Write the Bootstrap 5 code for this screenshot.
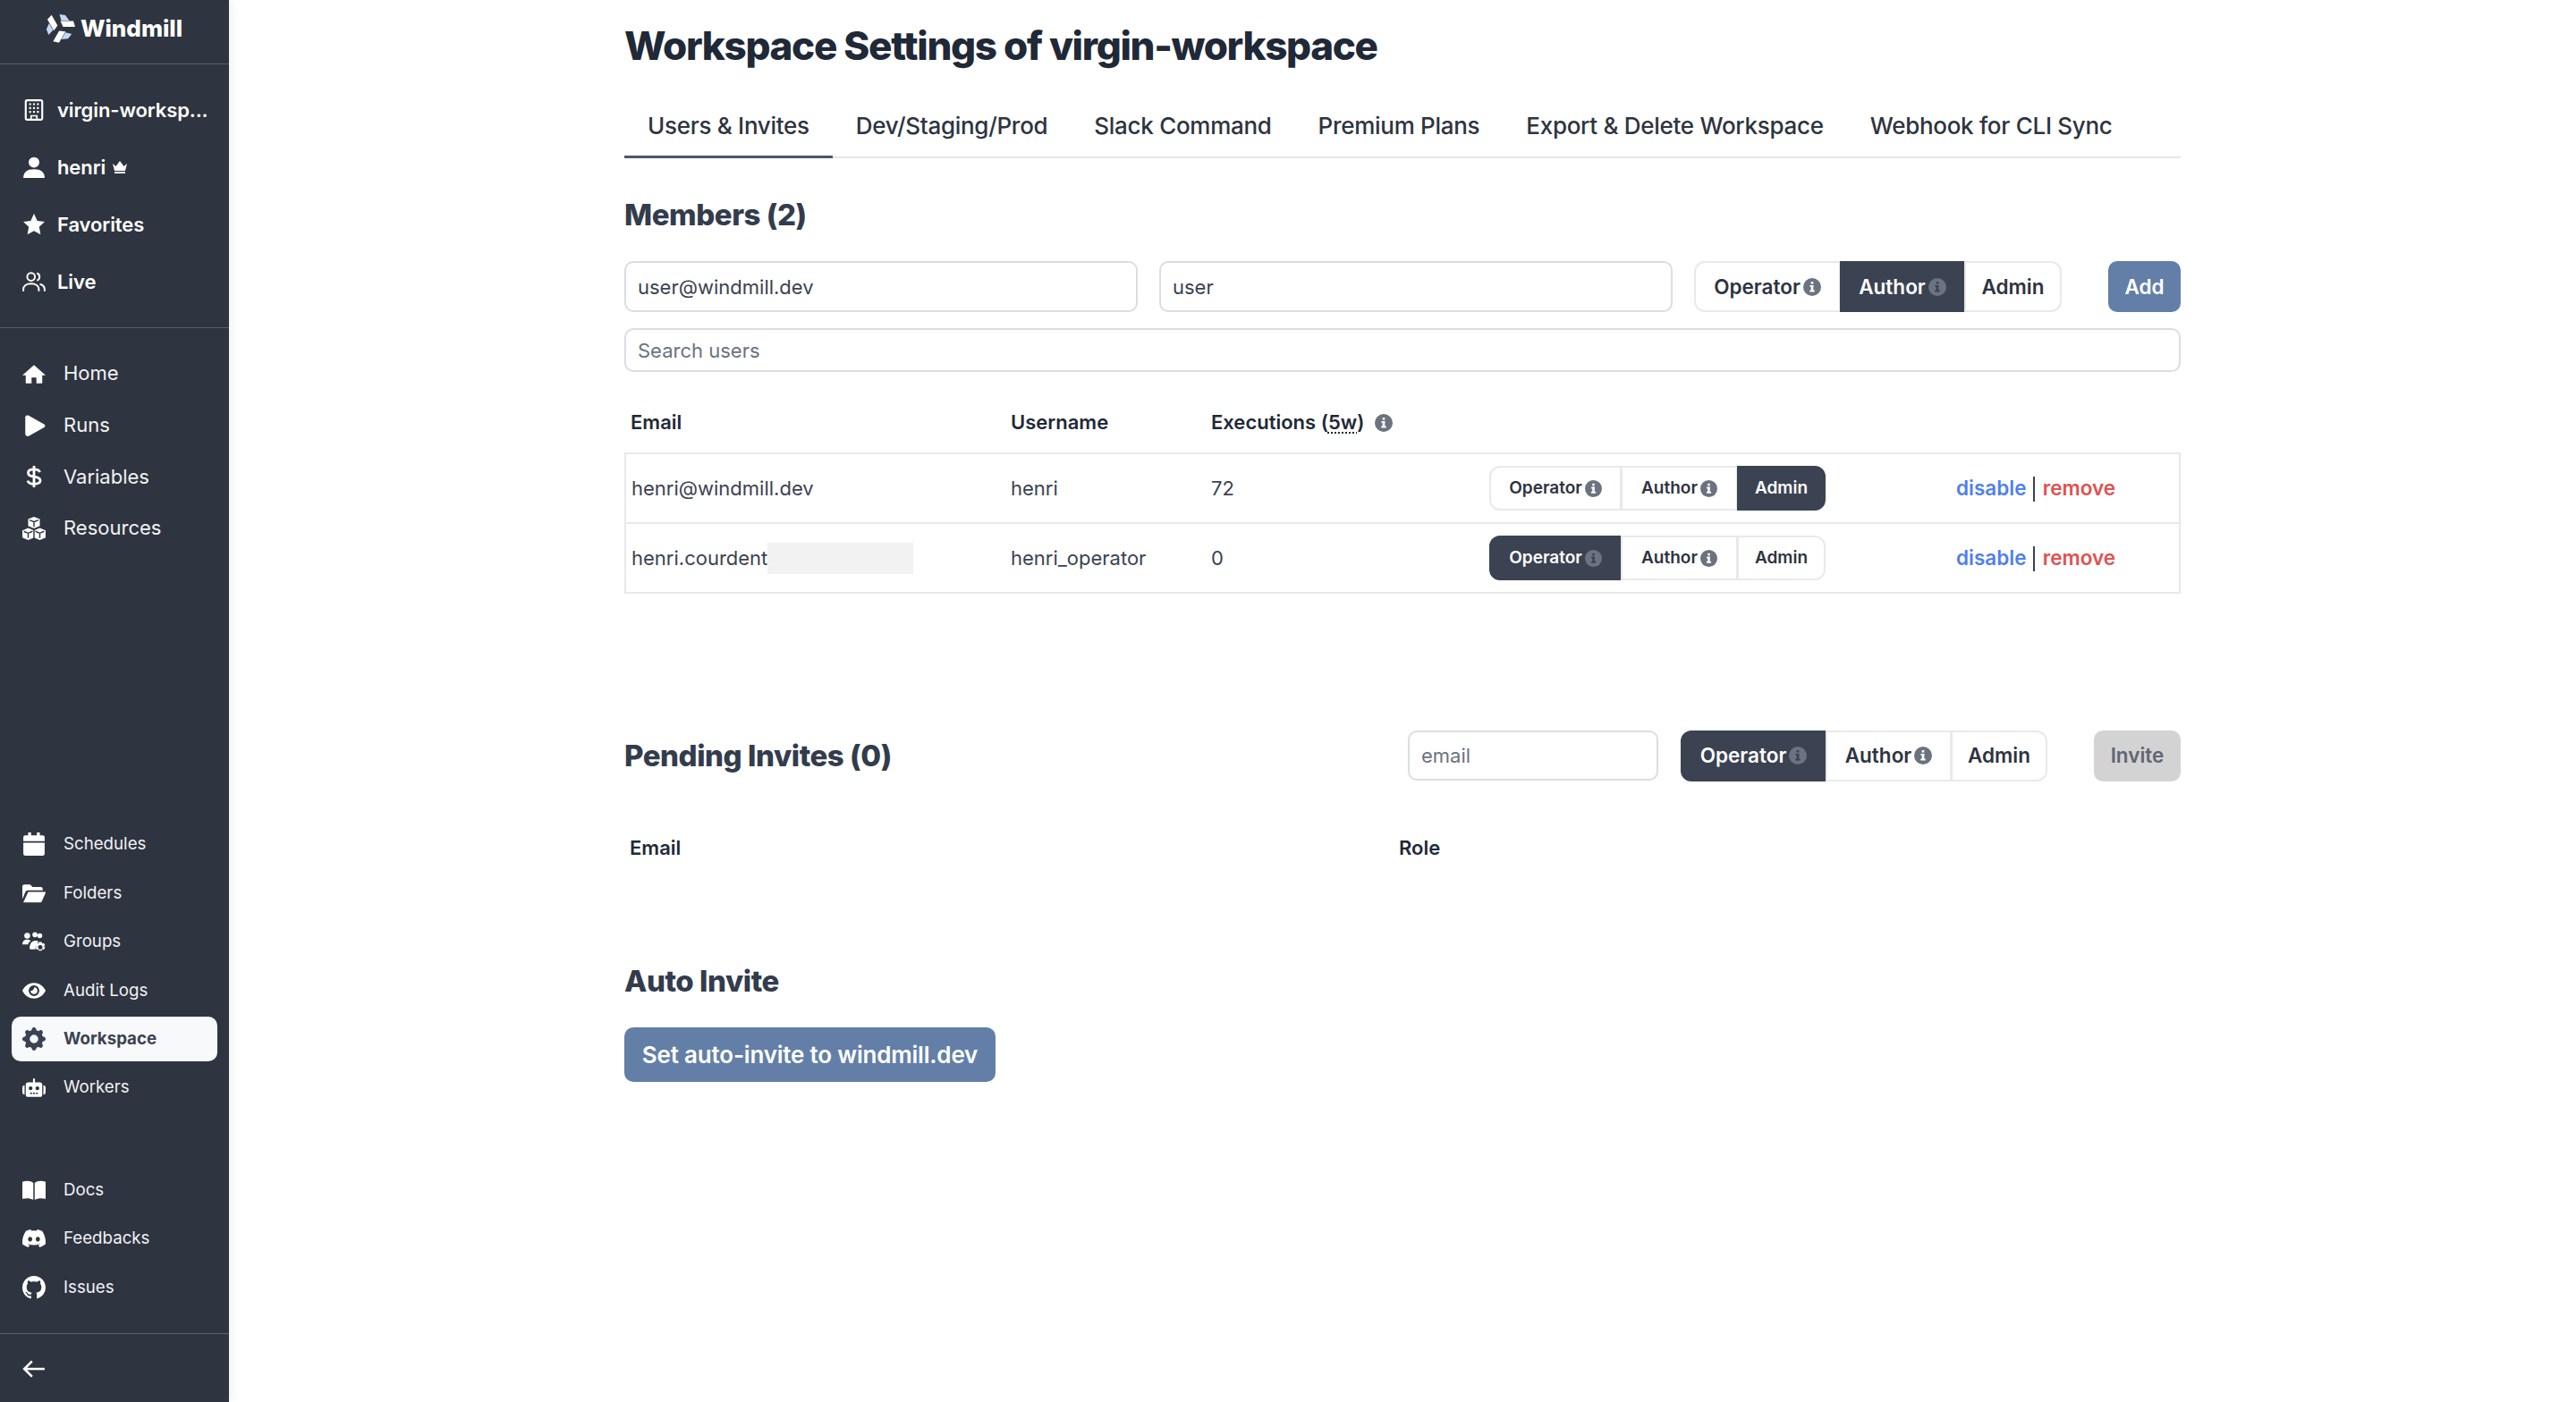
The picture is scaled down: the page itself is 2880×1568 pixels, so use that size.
<!DOCTYPE html>
<html lang="en">
<head>
<meta charset="UTF-8">
<title>Workspace Settings</title>
<link href="https://cdn.jsdelivr.net/npm/bootstrap@5.3.3/dist/css/bootstrap.min.css" rel="stylesheet">
<style>
body { font-family: Inter, "Liberation Sans", sans-serif; color: #2e3440; background: #fff; height: 1568px; overflow: hidden; }
.wm-side { width: 256px; height: 1568px; background: #2e3440; color: #fff; box-shadow: 4px 0 10px rgba(0,0,0,.05); flex-shrink: 0; }
.wm-logo { height: 72px; padding: 0 3px 9px 0; border-bottom: 1px solid #5a606c; font-size: 26px; font-weight: 800; gap: 5px; }
.wm-logo svg { width: 36px; height: 36px; flex-shrink: 0; }
.wm-group-top { height: 295px; padding-top: 19px; border-bottom: 1px solid #5a606c; }
.wm-top-item { height: 64px; padding-left: 25px; gap: 13px; font-size: 22px; font-weight: 600; letter-spacing: -.1px; }
.wm-top-item svg, .wm-main-item svg, .wm-small-item svg { width: 26px; height: 26px; flex-shrink: 0; fill: #fff; }
.wm-main { padding-top: 22px; }
.wm-main-item { height: 57.7px; padding-left: 25px; gap: 20px; font-size: 22px; font-weight: 400; color: #f1f2f4; }
.wm-small { margin-top: 297.5px; }
.wm-small-b { margin-top: 60px; }
.wm-small-item { height: 54.4px; gap: 20px; font-size: 18.7px; color: #f1f2f4; margin: 0 13px; padding-left: 12px; border-radius: 10px; }
.wm-small-item.wm-active { background: #f8f9fb; color: #3b4252; font-weight: 700; height: 50px; margin-top: 2px; margin-bottom: 2.4px; }
.wm-small-item.wm-active svg { fill: #3b4252; }
.wm-foot { margin-top: auto; height: 77px; padding-top: 2px; border-top: 1px solid #5a606c; padding-left: 25px; }
.wm-foot svg { width: 26px; height: 26px; }
.wm-content { width: 1740px; margin: 0 auto; }
.wm-title { font-size: 44px; font-weight: 800; line-height: 56px; margin: 23px 0 26px; color: #1f2937; letter-spacing: -1.34px; }
.wm-tabs { border-bottom: 2px solid #e5e7eb; height: 72px; }
.wm-tabs .nav-link { color: #2e3440; font-size: 26px; font-weight: 500; letter-spacing: -.29px; padding: 0 26px; height: 72px; line-height: 71px; margin-bottom: -2px; border-bottom: 3px solid transparent; }
.wm-tabs .nav-link.active { border-bottom-color: #4c566a; }
.wm-h2 { font-size: 33px; font-weight: 800; line-height: 40px; margin: 0; color: #333c4d; letter-spacing: -.45px; }
.wm-members { margin-top: 43px; }
.wm-addrow { margin-top: 32px; height: 57px; gap: 24px; }
.wm-addrow .form-control { height: 57px; }
.form-control { border: 2px solid #dcdde4; border-radius: 10px; font-size: 22px; padding: 0 13px; color: #3b4252; box-shadow: none; }
.form-control::placeholder { color: #6b7280; opacity: 1; }
.wm-search { height: 49px; margin-top: 18px; }
.wm-toggle .btn { background: #fff; color: #2e3440; border: 2px solid #e8e9ed; font-weight: 600; display: inline-flex; align-items: center; justify-content: center; gap: 3px; border-radius: 0; }
.wm-toggle .btn:first-child { border-top-left-radius: 12px; border-bottom-left-radius: 12px; }
.wm-toggle .btn:last-child { border-top-right-radius: 12px; border-bottom-right-radius: 12px; }
.wm-toggle .btn.wm-on { background: #3b4252; color: #fff; border-color: #3b4252; --wm-i: #3b4252; }
.wm-toggle svg { fill: #6b7280; flex-shrink: 0; }
.wm-i-glyph { fill: var(--wm-i, #fff); }
.wm-lg .btn { height: 57px; font-size: 22.5px; padding: 0; }
.wm-lg svg { width: 20px; height: 20px; }
.wm-md .btn { height: 50px; font-size: 19px; padding: 0; }
.wm-md svg { width: 19px; height: 19px; }
.wm-w1 { width: 164px; } .wm-w2 { width: 140px; } .wm-w3 { width: 109px; }
.wm-w4 { width: 148px; } .wm-w5 { width: 131px; } .wm-w6 { width: 99px; }
.wm-w7 { width: 163px; } .wm-w8 { width: 141px; } .wm-w9 { width: 108px; }
.wm-action { background: #637fa8; color: #fff; border: 0; border-radius: 10px; font-size: 22.5px; font-weight: 600; height: 57px; }
.wm-action:hover { background: #637fa8; color: #fff; }
.wm-add { width: 81px; margin-left: 52px; padding: 0; }
.wm-invite { width: 97px; margin-left: 52px; padding: 0; background: #d3d3d3; color: #5f6672; }
.wm-table { table-layout: fixed; width: 1740px; margin: 0; color: #3b4252; font-size: 22px; }
.wm-table th { font-weight: 600; color: #1f2937; padding: 39px 0 17px 6px; line-height: 34px; border: 0; }
.wm-table td { height: 78px; padding: 0 0 0 6px; vertical-align: middle; border-top: 2px solid #e7e8ea; }
.wm-table tbody { border-left: 2px solid #e7e8ea; border-right: 2px solid #e7e8ea; border-bottom: 2px solid #e7e8ea; }
.wm-table tbody tr:last-child td { border-bottom: 2px solid #e7e8ea; }
.wm-table tbody, .wm-table td { border-color: #e7e8ea; }
.wm-dotted { text-decoration: underline dotted; text-underline-offset: 3px; }
.wm-infohead { width: 20px; height: 20px; fill: #6b7280; vertical-align: -3px; margin-left: 6px; }
.wm-mask { display: inline-block; width: 163px; height: 35px; background: #f2f2f2; vertical-align: -10px; }
.wm-links { font-weight: 600; font-size: 22.5px; padding-left: 7px !important; }
.wm-links a { text-decoration: none; }
.wm-disable { color: #4f7fef; }
.wm-remove { color: #e05252; }
.wm-sep { display: inline-block; width: 2px; height: 28px; background: #3b4252; vertical-align: -7px; margin: 0 3px 0 2px; }
.wm-pending { margin-top: 153px; height: 56px; }
.wm-pending .form-control { width: 280px; height: 56px; margin-left: auto; margin-right: 25px; }
.wm-pending .wm-h2 { flex-shrink: 0; }
.wm-role th { padding-top: 58px; }
.wm-auto { margin-top: 95px; }
.wm-set { margin-top: 32px; width: 415px; height: 61px; font-size: 26px; letter-spacing: -.2px; padding: 0; }
</style>
</head>
<body>
<svg width="0" height="0" class="d-block position-absolute">
  <symbol id="i-info" viewBox="0 0 20 20"><circle cx="10" cy="10" r="10"/><rect class="wm-i-glyph" x="8.700" y="4" width="2.600" height="2.600"/><rect class="wm-i-glyph" x="7.500" y="8" width="3.800" height="2"/><rect class="wm-i-glyph" x="8.700" y="8" width="2.600" height="6.500"/><rect class="wm-i-glyph" x="7.300" y="13.500" width="5.400" height="2"/></symbol>
</svg>
<div class="d-flex">
  <nav class="wm-side d-flex flex-column">
    <div class="wm-logo d-flex align-items-center justify-content-center">
      <svg viewBox="-18 -18 36 36">
        <polygon points=".5,-7.500 15,-7.500 17,-1 3.500,-1" fill="#fff"/>
        <polygon points=".5,-7.500 15,-7.500 17,-1 3.500,-1" fill="#fff" transform="rotate(120)"/>
        <polygon points=".5,-7.500 15,-7.500 17,-1 3.500,-1" fill="#fff" transform="rotate(240)"/>
        <polygon points="-.5,-15 6,-14 10.500,-8 1.500,-8" fill="#c3d6f5"/>
        <polygon points="-.5,-15 6,-14 10.500,-8 1.500,-8" fill="#c3d6f5" transform="rotate(120)"/>
        <polygon points="-.5,-15 6,-14 10.500,-8 1.500,-8" fill="#c3d6f5" transform="rotate(240)"/>
      </svg>
      <span>Windmill</span>
    </div>
    <div class="wm-group-top">
      <div class="wm-top-item d-flex align-items-center">
        <svg viewBox="0 0 24 24"><path fill="none" stroke="#fff" stroke-width="2" d="M5 2h14a1.500 1.500 0 0 1 1.500 1.500v17a1.500 1.500 0 0 1-1.500 1.500H5a1.500 1.500 0 0 1-1.500-1.500v-17A1.500 1.500 0 0 1 5 2z"/><path d="M7 5h2v2H7zm4 0h2v2h-2zm4 0h2v2h-2zM7 9h2v2H7zm4 0h2v2h-2zm4 0h2v2h-2zM7 13h2v2H7zm4 0h2v2h-2zm4 0h2v2h-2z"/><path fill="none" stroke="#fff" stroke-width="1.600" d="M9 22v-4h6v4"/></svg>
        <span>virgin-worksp...</span>
      </div>
      <div class="wm-top-item d-flex align-items-center">
        <svg viewBox="0 0 24 24"><circle cx="12" cy="7" r="5.500"/><path d="M1 23c0-6 4-9 11-9s11 3 11 9z"/></svg>
        <span class="d-flex align-items-center gap-2">henri <svg class="wm-crown" style="width:16px;height:14px" viewBox="0 0 16 14"><path d="M0 3l3.500 3L8 0l4.500 6L16 3l-2 8H2zM2 12h12v2H2z"/></svg></span>
      </div>
      <div class="wm-top-item d-flex align-items-center">
        <svg viewBox="0 0 24 24"><path d="M12 1l3.400 7.200 7.600 1-5.600 5.400 1.400 7.800-6.800-3.800-6.800 3.800 1.400-7.800L1 9.200l7.600-1z"/></svg>
        <span>Favorites</span>
      </div>
      <div class="wm-top-item d-flex align-items-center">
        <svg viewBox="0 0 24 24"><g fill="none" stroke="#fff" stroke-width="1.800"><circle cx="9" cy="7" r="4"/><path d="M1 22v-2c0-3.500 3-6 8-6s8 2.500 8 6v2M15 3.200a4 4 0 0 1 0 7.600M18 14.500c3 .8 5 2.800 5 5.500v2"/></g></svg>
        <span>Live</span>
      </div>
    </div>
    <div class="wm-main">
      <div class="wm-main-item d-flex align-items-center">
        <svg viewBox="0 0 24 24"><path d="M12 3L0 13.500h3.500V22h6v-6h5v6h6v-8.500H24z"/></svg><span>Home</span>
      </div>
      <div class="wm-main-item d-flex align-items-center">
        <svg viewBox="0 0 24 24"><path d="M3 3.500C3 1.500 5 .8 6.500 1.700l16 9c1.300.7 1.300 2.500 0 3.200l-16 9C5 23.200 3 22.500 3 20.500z"/></svg><span>Runs</span>
      </div>
      <div class="wm-main-item d-flex align-items-center">
        <svg viewBox="0 0 24 24"><path fill="none" stroke="#fff" stroke-width="2.600" d="M18 7.500c-.5-2-3-3-6-3-3.500 0-6 1.300-6 3.700 0 5.500 12.500 2.500 12.500 7.800 0 2.500-3 3.700-6.500 3.700-3.200 0-5.800-1.200-6.500-3.500M12 1v22"/></svg><span>Variables</span>
      </div>
      <div class="wm-main-item d-flex align-items-center">
        <svg viewBox="0 0 24 24"><path d="M12 0l6 2.400v7L12 12 6 9.400v-7zM6 11.500l6 2.500v7.500L6 24l-6-2.500V14zM18 11.500l6 2.500v7.500L18 24l-6-2.500V14z"/><path fill="none" stroke="#2e3440" stroke-width="1.300" d="M7.500 3.400L12 5.300l4.500-1.900M12 5.300v5M1.500 15L6 16.900 10.500 15M6 16.900v5M13.500 15l4.500 1.900 4.500-1.900M18 16.900v5M12 12v12"/></svg><span>Resources</span>
      </div>
    </div>
    <div class="wm-small">
      <div class="wm-small-item d-flex align-items-center">
        <svg viewBox="0 0 24 24"><path d="M6 0h3v3h6V0h3v3h3a2 2 0 0 1 2 2v4H1V5a2 2 0 0 1 2-2h3zM1 10.500h22V22a2 2 0 0 1-2 2H3a2 2 0 0 1-2-2z"/></svg><span>Schedules</span>
      </div>
      <div class="wm-small-item d-flex align-items-center">
        <svg viewBox="0 0 24 24"><path d="M0 5a2 2 0 0 1 2-2h6l2.500 2.500H19a2 2 0 0 1 2 2V9H6c-1.500 0-2.500.8-3 2l-3 7z"/><path d="M6 10.500h17c.8 0 1.200.6.900 1.300L20 20.500c-.3.600-.8 1-1.500 1H1z"/></svg><span>Folders</span>
      </div>
      <div class="wm-small-item d-flex align-items-center">
        <svg viewBox="0 0 24 24"><circle cx="5" cy="6" r="3"/><circle cx="13" cy="5" r="2.600"/><path d="M0 15c0-3 2-5 5-5 2 0 3 .7 3.500 1.500C6.500 12.500 6 14 6 15zM7.500 19c0-4.500 2-8 6-8 1.500 0 2.500.4 3 1l-3 6.500v1.500H8z"/><circle cx="18" cy="6" r="2.500"/><path fill-rule="evenodd" d="M17 12.500h3l.4 1.600 1.700-.6 1.400 2.400-1.300 1.100 1.300 1.100-1.400 2.400-1.700-.6-.4 1.600h-3l-.4-1.600-1.700.6-1.400-2.400 1.300-1.100-1.300-1.100 1.400-2.400 1.700.6zM18.500 15.700a2.300 2.300 0 1 0 0 4.600 2.300 2.300 0 0 0 0-4.600z"/></svg><span>Groups</span>
      </div>
      <div class="wm-small-item d-flex align-items-center">
        <svg viewBox="0 0 24 24"><path fill-rule="evenodd" d="M12 4C6 4 2 8 0 12c2 4 6 8 12 8s10-4 12-8c-2-4-6-8-12-8zm0 2.500a5.500 5.500 0 1 1 0 11 5.500 5.500 0 0 1 0-11z"/><path d="M12 8.500a3.500 3.500 0 1 1-3.500 3.500c1.500.5 4-1.500 3.500-3.500z"/></svg><span>Audit Logs</span>
      </div>
      <div class="wm-small-item wm-active d-flex align-items-center">
        <svg viewBox="0 0 16 16"><path d="M9.405 1.050c-.413-1.400-2.397-1.400-2.810 0l-.1.340a1.464 1.464 0 0 1-2.105.872l-.31-.17c-1.283-.698-2.686.705-1.987 1.987l.169.311c.446.820.023 1.841-.872 2.105l-.34.100c-1.400.413-1.400 2.397 0 2.810l.34.100a1.464 1.464 0 0 1 .872 2.105l-.17.310c-.698 1.283.705 2.686 1.987 1.987l.311-.169a1.464 1.464 0 0 1 2.105.872l.1.340c.413 1.400 2.397 1.400 2.810 0l.1-.340a1.464 1.464 0 0 1 2.105-.872l.31.170c1.283.698 2.686-.705 1.987-1.987l-.169-.311a1.464 1.464 0 0 1 .872-2.105l.34-.100c1.400-.413 1.400-2.397 0-2.810l-.34-.100a1.464 1.464 0 0 1-.872-2.105l.17-.310c.698-1.283-.705-2.686-1.987-1.987l-.311.169a1.464 1.464 0 0 1-2.105-.872l-.1-.340zM8 10.930a2.929 2.929 0 1 1 0-5.860 2.929 2.929 0 0 1 0 5.858z"/></svg><span>Workspace</span>
      </div>
      <div class="wm-small-item d-flex align-items-center">
        <svg viewBox="0 0 24 24"><path fill-rule="evenodd" d="M11 3h2v4h5a2.500 2.500 0 0 1 2.500 2.500v10A2.500 2.500 0 0 1 18 22H6a2.500 2.500 0 0 1-2.500-2.500v-10A2.500 2.500 0 0 1 6 7h5zM8.500 11a2 2 0 1 0 0 4 2 2 0 0 0 0-4zm7 0a2 2 0 1 0 0 4 2 2 0 0 0 0-4zM8 17.500v1.500h2v-1.500zm3 0v1.500h2v-1.500zm3 0v1.500h2v-1.500z"/><path d="M0 12.500C0 11 1 10 2.300 10v9.500C1 19.500 0 18.500 0 17zM24 12.500c0-1.500-1-2.500-2.300-2.500v9.500c1.300 0 2.300-1 2.300-2.500z"/></svg><span>Workers</span>
      </div>
    </div>
    <div class="wm-small-b">
      <div class="wm-small-item d-flex align-items-center">
        <svg viewBox="0 0 24 24"><path d="M0 3.500C4 2 8.500 2.300 11.300 4.500V22C8.500 20.300 4 20 0 21zM24 3.500C20 2 15.500 2.300 12.700 4.500V22c2.800-1.700 7.300-2 11.300-1z"/></svg><span>Docs</span>
      </div>
      <div class="wm-small-item d-flex align-items-center">
        <svg viewBox="0 0 16 16"><path d="M13.545 2.907a13.227 13.227 0 0 0-3.257-1.011.05.05 0 0 0-.052.025c-.141.25-.297.577-.406.833a12.190 12.190 0 0 0-3.658 0 8.258 8.258 0 0 0-.412-.833.051.051 0 0 0-.052-.025c-1.125.194-2.220.534-3.257 1.011a.041.041 0 0 0-.021.018C.356 6.024-.213 9.047.066 12.032c.001.014.01.028.021.037a13.276 13.276 0 0 0 3.995 2.020.050.050 0 0 0 .056-.019c.308-.42.582-.863.818-1.329a.050.050 0 0 0-.01-.059.051.051 0 0 0-.018-.011 8.875 8.875 0 0 1-1.248-.595.050.050 0 0 1-.02-.066.051.051 0 0 1 .015-.019c.084-.063.168-.129.248-.195a.050.050 0 0 1 .051-.007c2.619 1.196 5.454 1.196 8.041 0a.052.052 0 0 1 .053.007c.08.066.164.132.248.195a.051.051 0 0 1-.004.085 8.254 8.254 0 0 1-1.249.594.050.050 0 0 0-.03.03.052.052 0 0 0 .003.041c.24.465.515.909.817 1.329a.050.050 0 0 0 .056.019 13.235 13.235 0 0 0 4.001-2.020.049.049 0 0 0 .021-.037c.334-3.451-.559-6.449-2.366-9.106a.034.034 0 0 0-.02-.019zm-8.198 7.307c-.789 0-1.438-.724-1.438-1.612 0-.889.637-1.613 1.438-1.613.807 0 1.450.73 1.438 1.613 0 .888-.637 1.612-1.438 1.612zm5.316 0c-.788 0-1.438-.724-1.438-1.612 0-.889.637-1.613 1.438-1.613.807 0 1.451.73 1.438 1.613 0 .888-.631 1.612-1.438 1.612z"/></svg><span>Feedbacks</span>
      </div>
      <div class="wm-small-item d-flex align-items-center">
        <svg viewBox="0 0 16 16"><path d="M8 0C3.580 0 0 3.580 0 8c0 3.540 2.290 6.530 5.470 7.590.4.070.55-.17.55-.38 0-.19-.01-.82-.01-1.490-2.010.37-2.530-.49-2.690-.94-.09-.23-.48-.94-.82-1.130-.28-.15-.68-.52-.01-.53.63-.01 1.080.58 1.230.82.72 1.210 1.870.87 2.330.66.07-.52.28-.87.51-1.070-1.780-.2-3.640-.89-3.640-3.950 0-.87.31-1.590.82-2.150-.08-.2-.36-1.020.08-2.120 0 0 .67-.21 2.200.82.64-.18 1.320-.27 2-.27.68 0 1.360.09 2 .27 1.530-1.040 2.200-.82 2.200-.82.44 1.100.16 1.920.08 2.120.51.56.82 1.270.82 2.150 0 3.070-1.870 3.750-3.650 3.950.29.25.54.73.54 1.480 0 1.070-.01 1.930-.01 2.200 0 .21.15.46.55.38A8.012 8.012 0 0 0 16 8c0-4.420-3.580-8-8-8z"/></svg><span>Issues</span>
      </div>
    </div>
    <div class="wm-foot d-flex align-items-center">
      <svg viewBox="0 0 24 24" fill="none" stroke="#fff" stroke-width="2.400"><path d="M23 12H2M10 4l-8 8 8 8"/></svg>
    </div>
  </nav>

  <main class="flex-grow-1">
    <div class="wm-content">
      <h1 class="wm-title">Workspace Settings of virgin-workspace</h1>
      <ul class="nav wm-tabs">
        <li class="nav-item"><a class="nav-link active" href="#">Users &amp; Invites</a></li>
        <li class="nav-item"><a class="nav-link" href="#">Dev/Staging/Prod</a></li>
        <li class="nav-item"><a class="nav-link" href="#">Slack Command</a></li>
        <li class="nav-item"><a class="nav-link" href="#">Premium Plans</a></li>
        <li class="nav-item"><a class="nav-link" href="#">Export &amp; Delete Workspace</a></li>
        <li class="nav-item"><a class="nav-link" href="#">Webhook for CLI Sync</a></li>
      </ul>

      <h2 class="wm-h2 wm-members">Members (2)</h2>
      <div class="d-flex wm-addrow">
        <input class="form-control flex-fill w-auto" value="user@windmill.dev">
        <input class="form-control flex-fill w-auto" value="user">
        <div class="d-flex flex-shrink-0">
          <div class="btn-group wm-toggle wm-lg">
            <button class="btn wm-w1">Operator<svg><use href="#i-info"/></svg></button>
            <button class="btn wm-w2 wm-on">Author<svg><use href="#i-info"/></svg></button>
            <button class="btn wm-w3">Admin</button>
          </div>
          <button class="btn wm-action wm-add">Add</button>
        </div>
      </div>
      <input class="form-control wm-search" placeholder="Search users">

      <table class="table wm-table">
        <colgroup><col style="width:425px"><col style="width:224px"><col style="width:311px"><col style="width:521px"><col></colgroup>
        <thead>
          <tr><th>Email</th><th>Username</th><th>Executions (<span class="wm-dotted">5w</span>) <svg class="wm-infohead"><use href="#i-info"/></svg></th><th></th><th></th></tr>
        </thead>
        <tbody>
          <tr>
            <td>henri@windmill.dev</td><td>henri</td><td>72</td>
            <td>
              <div class="btn-group wm-toggle wm-md">
                <button class="btn wm-w4">Operator<svg><use href="#i-info"/></svg></button>
                <button class="btn wm-w5">Author<svg><use href="#i-info"/></svg></button>
                <button class="btn wm-w6 wm-on">Admin</button>
              </div>
            </td>
            <td class="wm-links"><a class="wm-disable" href="#">disable</a> <span class="wm-sep"></span> <a class="wm-remove" href="#">remove</a></td>
          </tr>
          <tr>
            <td>henri.courdent<span class="wm-mask"></span></td><td>henri_operator</td><td>0</td>
            <td>
              <div class="btn-group wm-toggle wm-md">
                <button class="btn wm-w4 wm-on">Operator<svg><use href="#i-info"/></svg></button>
                <button class="btn wm-w5">Author<svg><use href="#i-info"/></svg></button>
                <button class="btn wm-w6">Admin</button>
              </div>
            </td>
            <td class="wm-links"><a class="wm-disable" href="#">disable</a> <span class="wm-sep"></span> <a class="wm-remove" href="#">remove</a></td>
          </tr>
        </tbody>
      </table>

      <div class="d-flex align-items-center wm-pending">
        <h2 class="wm-h2">Pending Invites (0)</h2>
        <input class="form-control" placeholder="email">
        <div class="btn-group wm-toggle wm-lg">
          <button class="btn wm-w7 wm-on">Operator<svg><use href="#i-info"/></svg></button>
          <button class="btn wm-w8">Author<svg><use href="#i-info"/></svg></button>
          <button class="btn wm-w9">Admin</button>
        </div>
        <button class="btn wm-action wm-invite">Invite</button>
      </div>

      <table class="table wm-table wm-role">
        <colgroup><col style="width:860px"><col></colgroup>
        <thead><tr><th>Email</th><th>Role</th></tr></thead>
      </table>

      <h2 class="wm-h2 wm-auto">Auto Invite</h2>
      <button class="btn wm-action wm-set">Set auto-invite to windmill.dev</button>
    </div>
  </main>
</div>
</body>
</html>
